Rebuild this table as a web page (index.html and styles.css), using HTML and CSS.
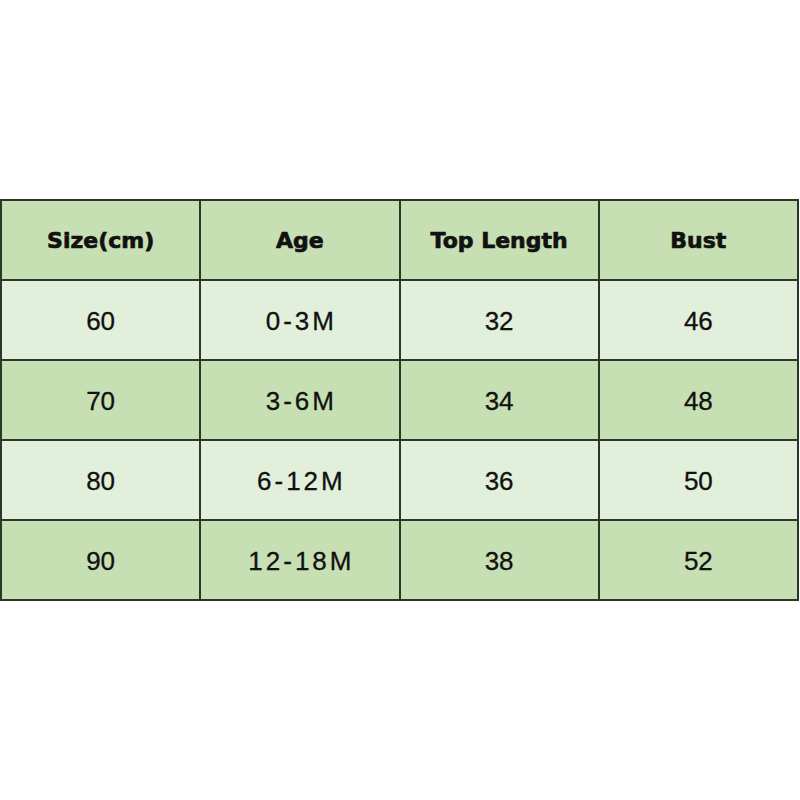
FILE: index.html
```html
<!DOCTYPE html>
<html>
<head>
<meta charset="utf-8">
<link rel="stylesheet" href="styles.css">
</head>
<body>
<div class="page">
  <table class="size-table">
    <thead>
      <tr class="row-head">
        <th>Size(cm)</th><th>Age</th><th>Top Length</th><th>Bust</th>
      </tr>
    </thead>
    <tbody>
      <tr class="row-light"><td>60</td><td class="age">0-3M</td><td>32</td><td>46</td></tr>
      <tr class="row-green"><td>70</td><td class="age">3-6M</td><td>34</td><td>48</td></tr>
      <tr class="row-light"><td>80</td><td class="age">6-12M</td><td>36</td><td>50</td></tr>
      <tr class="row-green"><td>90</td><td class="age">12-18M</td><td>38</td><td>52</td></tr>
    </tbody>
  </table>
</div>
</body>
</html>
```
FILE: styles.css
```css
html, body {
  margin: 0;
  padding: 0;
  background: #ffffff;
}
.page {
  width: 800px;
  height: 800px;
  padding-top: 199px;
  box-sizing: border-box;
}
.size-table {
  width: 799px;
  border-collapse: collapse;
  table-layout: fixed;
  color: #111;
}
.size-table th,
.size-table td {
  border: 2px solid #2b372b;
  height: 80px;
  padding: 0;
  text-align: center;
  vertical-align: middle;
  box-sizing: border-box;
}
.size-table th {
  font-family: "DejaVu Sans", sans-serif;
  font-weight: bold;
  font-size: 22px;
  -webkit-text-stroke: 0.7px #111;
}
.size-table td {
  font-family: "Liberation Sans", Arial, sans-serif;
  font-size: 26px;
  padding-top: 2px;
  -webkit-text-stroke: 0.3px #111;
}
.size-table td.age {
  letter-spacing: 3px;
  text-indent: 3px;
}
.row-head, .row-green {
  background: #c6e0b4;
}
.row-light {
  background: #e2efda;
}
```
